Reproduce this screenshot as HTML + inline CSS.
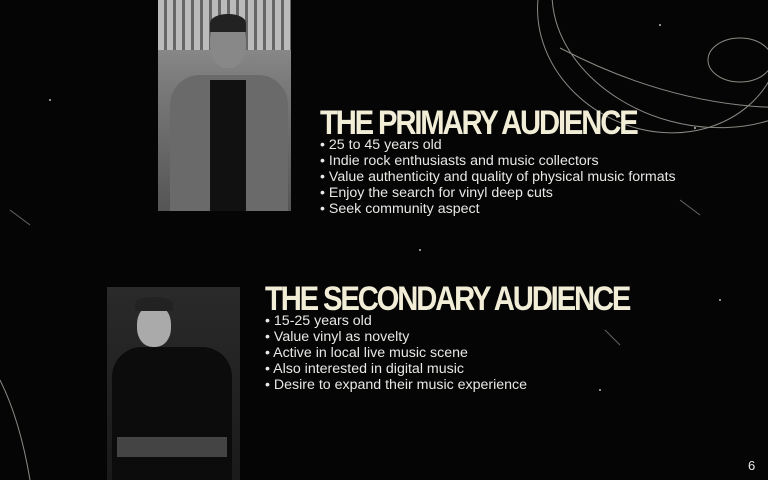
<!DOCTYPE html>
<html><head><style>
body{margin:0;width:768px;height:480px;background:#050505;overflow:hidden;position:relative;font-family:"Liberation Sans",sans-serif;}
.ph{position:absolute;overflow:hidden}
.t{position:absolute;color:#f1edd6;font-weight:bold;font-size:34px;letter-spacing:-2.5px;white-space:nowrap;transform-origin:left top;transform:scaleX(0.86);line-height:1}
.b{position:absolute;color:#e8e8e4;font-size:14.2px;line-height:16px;white-space:nowrap}
</style></head><body>
<svg width="768" height="480" style="position:absolute;left:0;top:0" fill="none" stroke="#8a8a84" stroke-width="1">
<ellipse cx="660" cy="20" rx="125" ry="110" transform="rotate(25 660 20)"/>
<ellipse cx="700" cy="10" rx="150" ry="115" transform="rotate(15 700 10)"/>
<path d="M560 48 Q650 95 740 105 T775 80"/>
<ellipse cx="740" cy="60" rx="32" ry="22"/>
<path d="M0 380 Q20 420 30 480"/>
<g stroke="#666" stroke-width="1"><path d="M680 200 L700 215"/><path d="M605 330 L620 345"/><path d="M10 210 L30 225"/></g>
<g fill="#bbb" stroke="none"><circle cx="660" cy="25" r="1"/><circle cx="695" cy="128" r="1"/><circle cx="530" cy="195" r="1"/><circle cx="600" cy="390" r="1"/><circle cx="50" cy="100" r="1"/><circle cx="720" cy="300" r="1"/><circle cx="420" cy="250" r="1"/></g>
</svg>
<div class="ph" style="left:158px;top:0;width:133px;height:211px;background:linear-gradient(#9a9a9a,#7a7a7a 40%,#555)">
<div style="position:absolute;left:0;top:0;width:133px;height:50px;background:repeating-linear-gradient(90deg,#bbb 0 6px,#666 6px 9px)"></div>
<div style="position:absolute;left:52px;top:18px;width:36px;height:50px;border-radius:45%;background:#888"></div>
<div style="position:absolute;left:52px;top:14px;width:36px;height:18px;border-radius:50% 50% 0 0;background:#222"></div>
<div style="position:absolute;left:12px;top:75px;width:118px;height:136px;border-radius:30px 30px 0 0;background:#6a6a6a"></div>
<div style="position:absolute;left:52px;top:80px;width:36px;height:131px;background:#111"></div>
</div>
<div class="ph" style="left:107px;top:287px;width:133px;height:193px;background:linear-gradient(#2a2a2a,#1a1a1a)">
<div style="position:absolute;left:30px;top:18px;width:34px;height:42px;border-radius:45%;background:#aaa"></div>
<div style="position:absolute;left:28px;top:10px;width:38px;height:14px;border-radius:50% 50% 10% 10%;background:#222"></div>
<div style="position:absolute;left:5px;top:60px;width:120px;height:133px;border-radius:30px 30px 0 0;background:#0c0c0c"></div>
<div style="position:absolute;left:10px;top:150px;width:110px;height:20px;background:#444"></div>
</div>
<div class="t" style="left:320px;top:106px">THE PRIMARY AUDIENCE</div>
<div class="b" style="left:320px;top:137px">• 25 to 45 years old<br>• Indie rock enthusiasts and music collectors<br>• Value authenticity and quality of physical music formats<br>• Enjoy the search for vinyl deep cuts<br>• Seek community aspect</div>
<div class="t" style="left:265px;top:282px">THE SECONDARY AUDIENCE</div>
<div class="b" style="left:265px;top:313px">• 15-25 years old<br>• Value vinyl as novelty<br>• Active in local live music scene<br>• Also interested in digital music<br>• Desire to expand their music experience</div>
<div class="b" style="left:748px;top:458px;font-size:13px">6</div>
</body></html>
